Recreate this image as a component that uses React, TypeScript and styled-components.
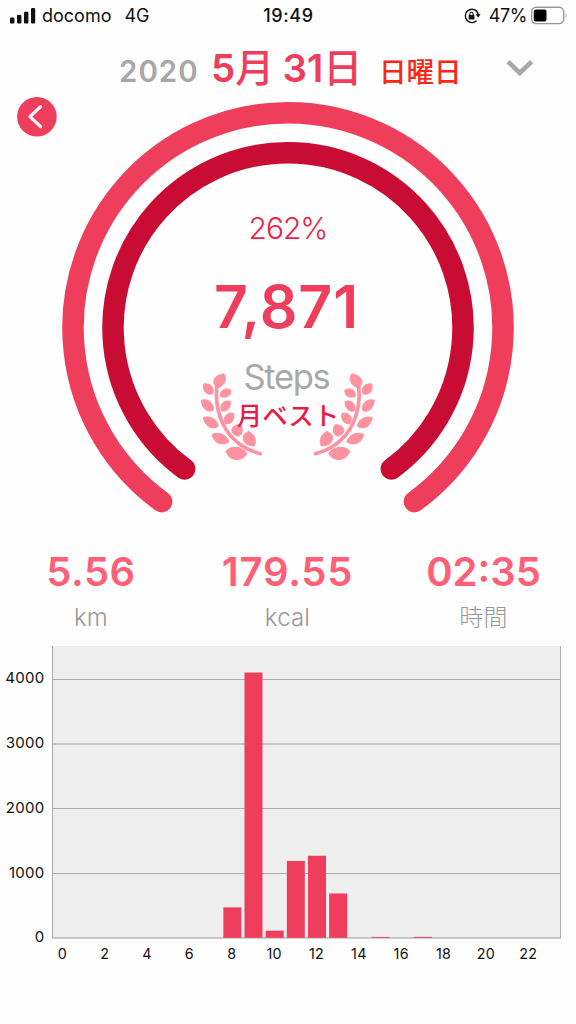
import React from "react";
import styled, { createGlobalStyle } from "styled-components";

const PINK = "#ef3e5b";
const CRIMSON = "#c90c33";
const CORAL = "#ff6076";
const LEAF = "#ff92a1";
const GRAY = "#a8a8a8";

const GlobalStyle = createGlobalStyle`
  * { box-sizing: border-box; }
  body {
    margin: 0;
    background: #fefefe;
    font-family: Inter, "Noto Sans CJK JP", sans-serif;
  }
`;

const Screen = styled.main`
  width: 576px;
  height: 1024px;
  overflow: hidden;
  display: flex;
  flex-direction: column;
`;

const StatusBar = styled.header`
  height: 32px;
  flex: none;
  display: grid;
  grid-template-columns: 1fr auto 1fr;
  align-items: center;
  padding: 0 9px 0 10px;
  font-size: 18px;
  line-height: 32px;
  color: #111;
`;

const StatusGroup = styled.div<{ $end?: boolean }>`
  display: flex;
  align-items: center;
  justify-content: ${(p) => (p.$end ? "flex-end" : "flex-start")};
`;

const StatusText = styled.span<{ $gap?: number; $weight?: number; $spacing?: number }>`
  margin-left: ${(p) => p.$gap ?? 0}px;
  font-weight: ${(p) => p.$weight ?? 400};
  letter-spacing: ${(p) => p.$spacing ?? 0}px;
  white-space: nowrap;
`;

const Icon = styled.svg<{ $gap?: number }>`
  display: block;
  flex: none;
  overflow: visible;
  margin-left: ${(p) => p.$gap ?? 0}px;
`;

const DateBar = styled.section`
  height: 64px;
  flex: none;
  display: flex;
  align-items: baseline;
  padding-left: 119px;
  white-space: nowrap;
  line-height: 71px;
`;

const Year = styled.span`
  width: 92px;
  font-size: 29.5px;
  font-weight: 600;
  color: ${GRAY};
  letter-spacing: 1px;
`;

const Day = styled.h1`
  width: 168px;
  margin: 0;
  font-size: 38.5px;
  font-weight: 600;
  word-spacing: -1.5px;
  color: ${PINK};
`;

const Kanji = styled.span`
  font-size: 39px;
  font-weight: 500;
`;

const Weekday = styled.span`
  width: 127px;
  font-size: 27.5px;
  font-weight: 500;
  color: #ff2616;
`;

const Chevron = styled(Icon)`
  align-self: flex-start;
  margin-top: 27px;
`;

const Gauge = styled.section`
  position: relative;
  height: 444px;
  flex: none;
`;

const Rings = styled.svg`
  display: block;
`;

const BackButton = styled.button`
  position: absolute;
  left: 17px;
  top: 1px;
  width: 40px;
  height: 40px;
  padding: 0;
  border: 0;
  background: none;
`;

const Readout = styled.div`
  position: absolute;
  inset: 0;
  padding-top: 112px;
  display: flex;
  flex-direction: column;
  align-items: center;
`;

const Percent = styled.div`
  font-size: 30px;
  line-height: 40px;
  font-weight: 300;
  letter-spacing: -1px;
  color: #ec1f4b;
`;

const Steps = styled.div`
  margin-top: 24px;
  padding-right: 3px;
  font-size: 59px;
  line-height: 70px;
  font-weight: 600;
  letter-spacing: 0.9px;
  color: ${PINK};
`;

const StepsLabel = styled.div`
  margin-top: 13px;
  padding-right: 3px;
  font-size: 34.5px;
  line-height: 44px;
  letter-spacing: -1.3px;
  color: ${GRAY};
`;

const Best = styled.div`
  font-size: 25.5px;
  line-height: 34px;
  font-weight: 500;
  color: #e81c48;
`;

const Laurels = styled.svg`
  position: absolute;
  left: 195px;
  top: 269px;
`;

const Stats = styled.section`
  height: 106px;
  flex: none;
  display: grid;
  grid-template-columns: 182px 211px 181px;
  padding-top: 8px;
`;

const Stat = styled.div`
  text-align: center;
`;

const StatValue = styled.div<{ $spacing: number }>`
  font-size: 40px;
  line-height: 48px;
  font-weight: 600;
  letter-spacing: ${(p) => p.$spacing}px;
  color: ${CORAL};
`;

const StatUnit = styled.div`
  margin-top: 6px;
  font-size: 24px;
  line-height: 32px;
  font-weight: 300;
  letter-spacing: 0.2px;
  color: #999;
`;

const ChartSvg = styled.svg`
  display: block;
  flex: none;
`;

const AxisText = styled.text<{ $size: number; $spacing?: number }>`
  font-size: ${(p) => p.$size}px;
  letter-spacing: ${(p) => p.$spacing ?? 0}px;
  fill: #111;
`;

function arc(cx: number, cy: number, r: number, dx: number) {
  const dy = Math.sqrt(r * r - dx * dx);
  return `M${cx - dx} ${cy + dy}A${r} ${r} 0 1 1 ${cx + dx} ${cy + dy}`;
}

function Branch() {
  return (
    <g fill={LEAF} stroke={LEAF} strokeWidth="3" strokeLinejoin="round">
      <path d="M66 60C58 130 80 235 196 266" fill="none" strokeWidth="11" strokeLinecap="round" />
      <path d="M86 26C95 37 95 56 71 68C53 63 54 46 62 37C69 29 78 30 86 26Z" />
      <path d="M26 57C42 54 60 63 53 86C42 91 26 84 26 70Z" />
      <path d="M19 106C37 100 56 111 55 135C44 144 21 136 19 106Z" />
      <path d="M25 158C45 152 66 162 70 183C56 195 31 189 25 158Z" />
      <path d="M51 208C73 200 95 209 102 231C81 243 57 237 51 208Z" />
      <path d="M92 260C104 241 143 242 156 266C148 281 131 285 119 283C102 281 99 268 92 260Z" />
      <path d="M108 76C108 92 97 100 77 95C72 76 91 65 108 76Z" />
      <path d="M106 109C109 126 98 141 80 138C71 118 88 104 106 109Z" />
      <path d="M116 145C120 166 109 178 92 176C81 157 95 141 116 145Z" />
      <path d="M134 177C146 190 145 208 129 214C108 208 106 191 117 184C123 180 129 181 134 177Z" />
      <path d="M160 199C178 207 186 224 178 243C151 243 139 226 147 210C151 204 156 204 160 199Z" />
    </g>
  );
}

const HOURLY: [number, number][] = [
  [8, 470], [9, 4100], [10, 110], [11, 1188], [12, 1268], [13, 685], [15, 9], [17, 12],
];
const LEFT = 52.5;
const RIGHT = 560.5;
const BASE = 291.8;
const UNIT = 64.7 / 1000;
const SLOT = (RIGHT - LEFT) / 24;

function StepChart() {
  return (
    <ChartSvg width="576" height="330" viewBox="0 0 576 330">
      <rect x={LEFT} y="0" width={RIGHT - LEFT} height={BASE} fill="#efefef" />
      {[33, 98, 162, 227].map((y, i) => (
        <rect key={y} x={LEFT} y={i === 1 ? 97 : y} width={RIGHT - LEFT} height={i === 1 ? 2 : 1} fill={i === 1 ? "#c6c6c6" : "#adadad"} />
      ))}
      <path d={`M${LEFT} 0V292M${RIGHT} 0V292`} stroke="#adadad" />
      <rect x={LEFT - 0.5} y="291.3" width={RIGHT - LEFT + 1} height="1.3" fill="#adadad" />
      {HOURLY.map(([h, v]) => (
        <rect key={h} x={LEFT + h * SLOT + 1.5} y={BASE - Math.max(v * UNIT, 0.9)} width="18" height={Math.max(v * UNIT, 0.9)} fill={PINK} />
      ))}
      {[4000, 3000, 2000, 1000, 0].map((v) => (
        <AxisText key={v} $size={15} $spacing={0.3} x="44.6" y={BASE - v * UNIT + 4.4} textAnchor="end">
          {v}
        </AxisText>
      ))}
      {Array.from({ length: 12 }, (_, i) => (
        <AxisText key={i} $size={14.3} $spacing={0.3} x={62.4 + i * 42.35} y="313.4" textAnchor="middle">
          {i * 2}
        </AxisText>
      ))}
    </ChartSvg>
  );
}

export default function App() {
  return (
    <Screen>
      <GlobalStyle />
      <StatusBar>
        <StatusGroup>
          <Icon width="25" height="16" viewBox="0 0 25 16" fill="#111">
            <rect x="0" y="9.5" width="4.4" height="6" rx="1" />
            <rect x="7" y="7" width="4.4" height="8.5" rx="1" />
            <rect x="14" y="3.7" width="4.4" height="11.8" rx="1" />
            <rect x="21" y="0" width="4.2" height="15.5" rx="1" />
          </Icon>
          <StatusText $gap={7}>docomo</StatusText>
          <StatusText $gap={13}>4G</StatusText>
        </StatusGroup>
        <StatusText $weight={500} $spacing={0.6}>19:49</StatusText>
        <StatusGroup $end>
          <Icon width="16" height="16" viewBox="0 0 16 16">
            <path d="M12.6 3A6.7 6.7 0 1 0 12.6 12.8" fill="none" stroke="#111" strokeWidth="1.4" />
            <path d="M11.9 2.4A6.7 6.7 0 0 1 14.2 7" fill="none" stroke="#111" strokeWidth="1.4" />
            <path d="M11.6 6.2H16.6L14.1 9.6Z" fill="#111" />
            <rect x="4.6" y="7" width="5.8" height="4.5" rx=".7" fill="#111" />
            <path d="M5.9 7.3V5.8A1.6 1.6 0 0 1 9.1 5.8V7.3" fill="none" stroke="#111" strokeWidth="1.1" />
          </Icon>
          <StatusText $gap={9} $spacing={-0.4}>47%</StatusText>
          <Icon $gap={4} width="36" height="18" viewBox="0 0 36 18">
            <rect x=".7" y=".2" width="32" height="16.4" rx="4.5" fill="none" stroke="#999" strokeWidth="1.4" />
            <rect x="2.8" y="2.4" width="12.7" height="12" rx="2" fill="#000" />
            <path d="M34.7 5.9Q36.6 8.3 34.7 10.9Z" fill="#999" />
          </Icon>
        </StatusGroup>
      </StatusBar>

      <DateBar>
        <Year>2020</Year>
        <Day>
          5<Kanji>月</Kanji> 31<Kanji>日</Kanji>
        </Day>
        <Weekday>日曜日</Weekday>
        <Chevron width="28" height="18" viewBox="0 0 28 18">
          <path d="M2 2.6L13.8 14L25.6 2.6" fill="none" stroke={GRAY} strokeWidth="4.6" />
        </Chevron>
      </DateBar>

      <Gauge>
        <Rings width="576" height="444" viewBox="0 96 576 444" fill="none" strokeLinecap="round">
          <path d={arc(288, 327.7, 215, 126.4)} stroke={PINK} strokeWidth="21.5" />
          <path d={arc(288, 327.7, 175, 103.3)} stroke={CRIMSON} strokeWidth="21.5" />
        </Rings>
        <BackButton aria-label="back">
          <Icon width="40" height="40" viewBox="0 0 40 40">
            <circle cx="19.9" cy="19.7" r="19.8" fill={PINK} />
            <path d="M23.6 9.7L13 19.6L23.6 29.7" fill="none" stroke="#fff" strokeWidth="3.2" strokeLinecap="round" strokeLinejoin="round" />
          </Icon>
        </BackButton>
        <Laurels width="186" height="100" viewBox="0 0 558 300">
          <Branch />
          <g transform="translate(557 0) scale(-1 1)">
            <Branch />
          </g>
        </Laurels>
        <Readout>
          <Percent>262%</Percent>
          <Steps>7,871</Steps>
          <StepsLabel>Steps</StepsLabel>
          <Best>月ベスト</Best>
        </Readout>
      </Gauge>

      <Stats>
        <Stat>
          <StatValue $spacing={0.5}>5.56</StatValue>
          <StatUnit>km</StatUnit>
        </Stat>
        <Stat>
          <StatValue $spacing={0.8}>179.55</StatValue>
          <StatUnit>kcal</StatUnit>
        </Stat>
        <Stat>
          <StatValue $spacing={0}>02:35</StatValue>
          <StatUnit>時間</StatUnit>
        </Stat>
      </Stats>

      <StepChart />
    </Screen>
  );
}
